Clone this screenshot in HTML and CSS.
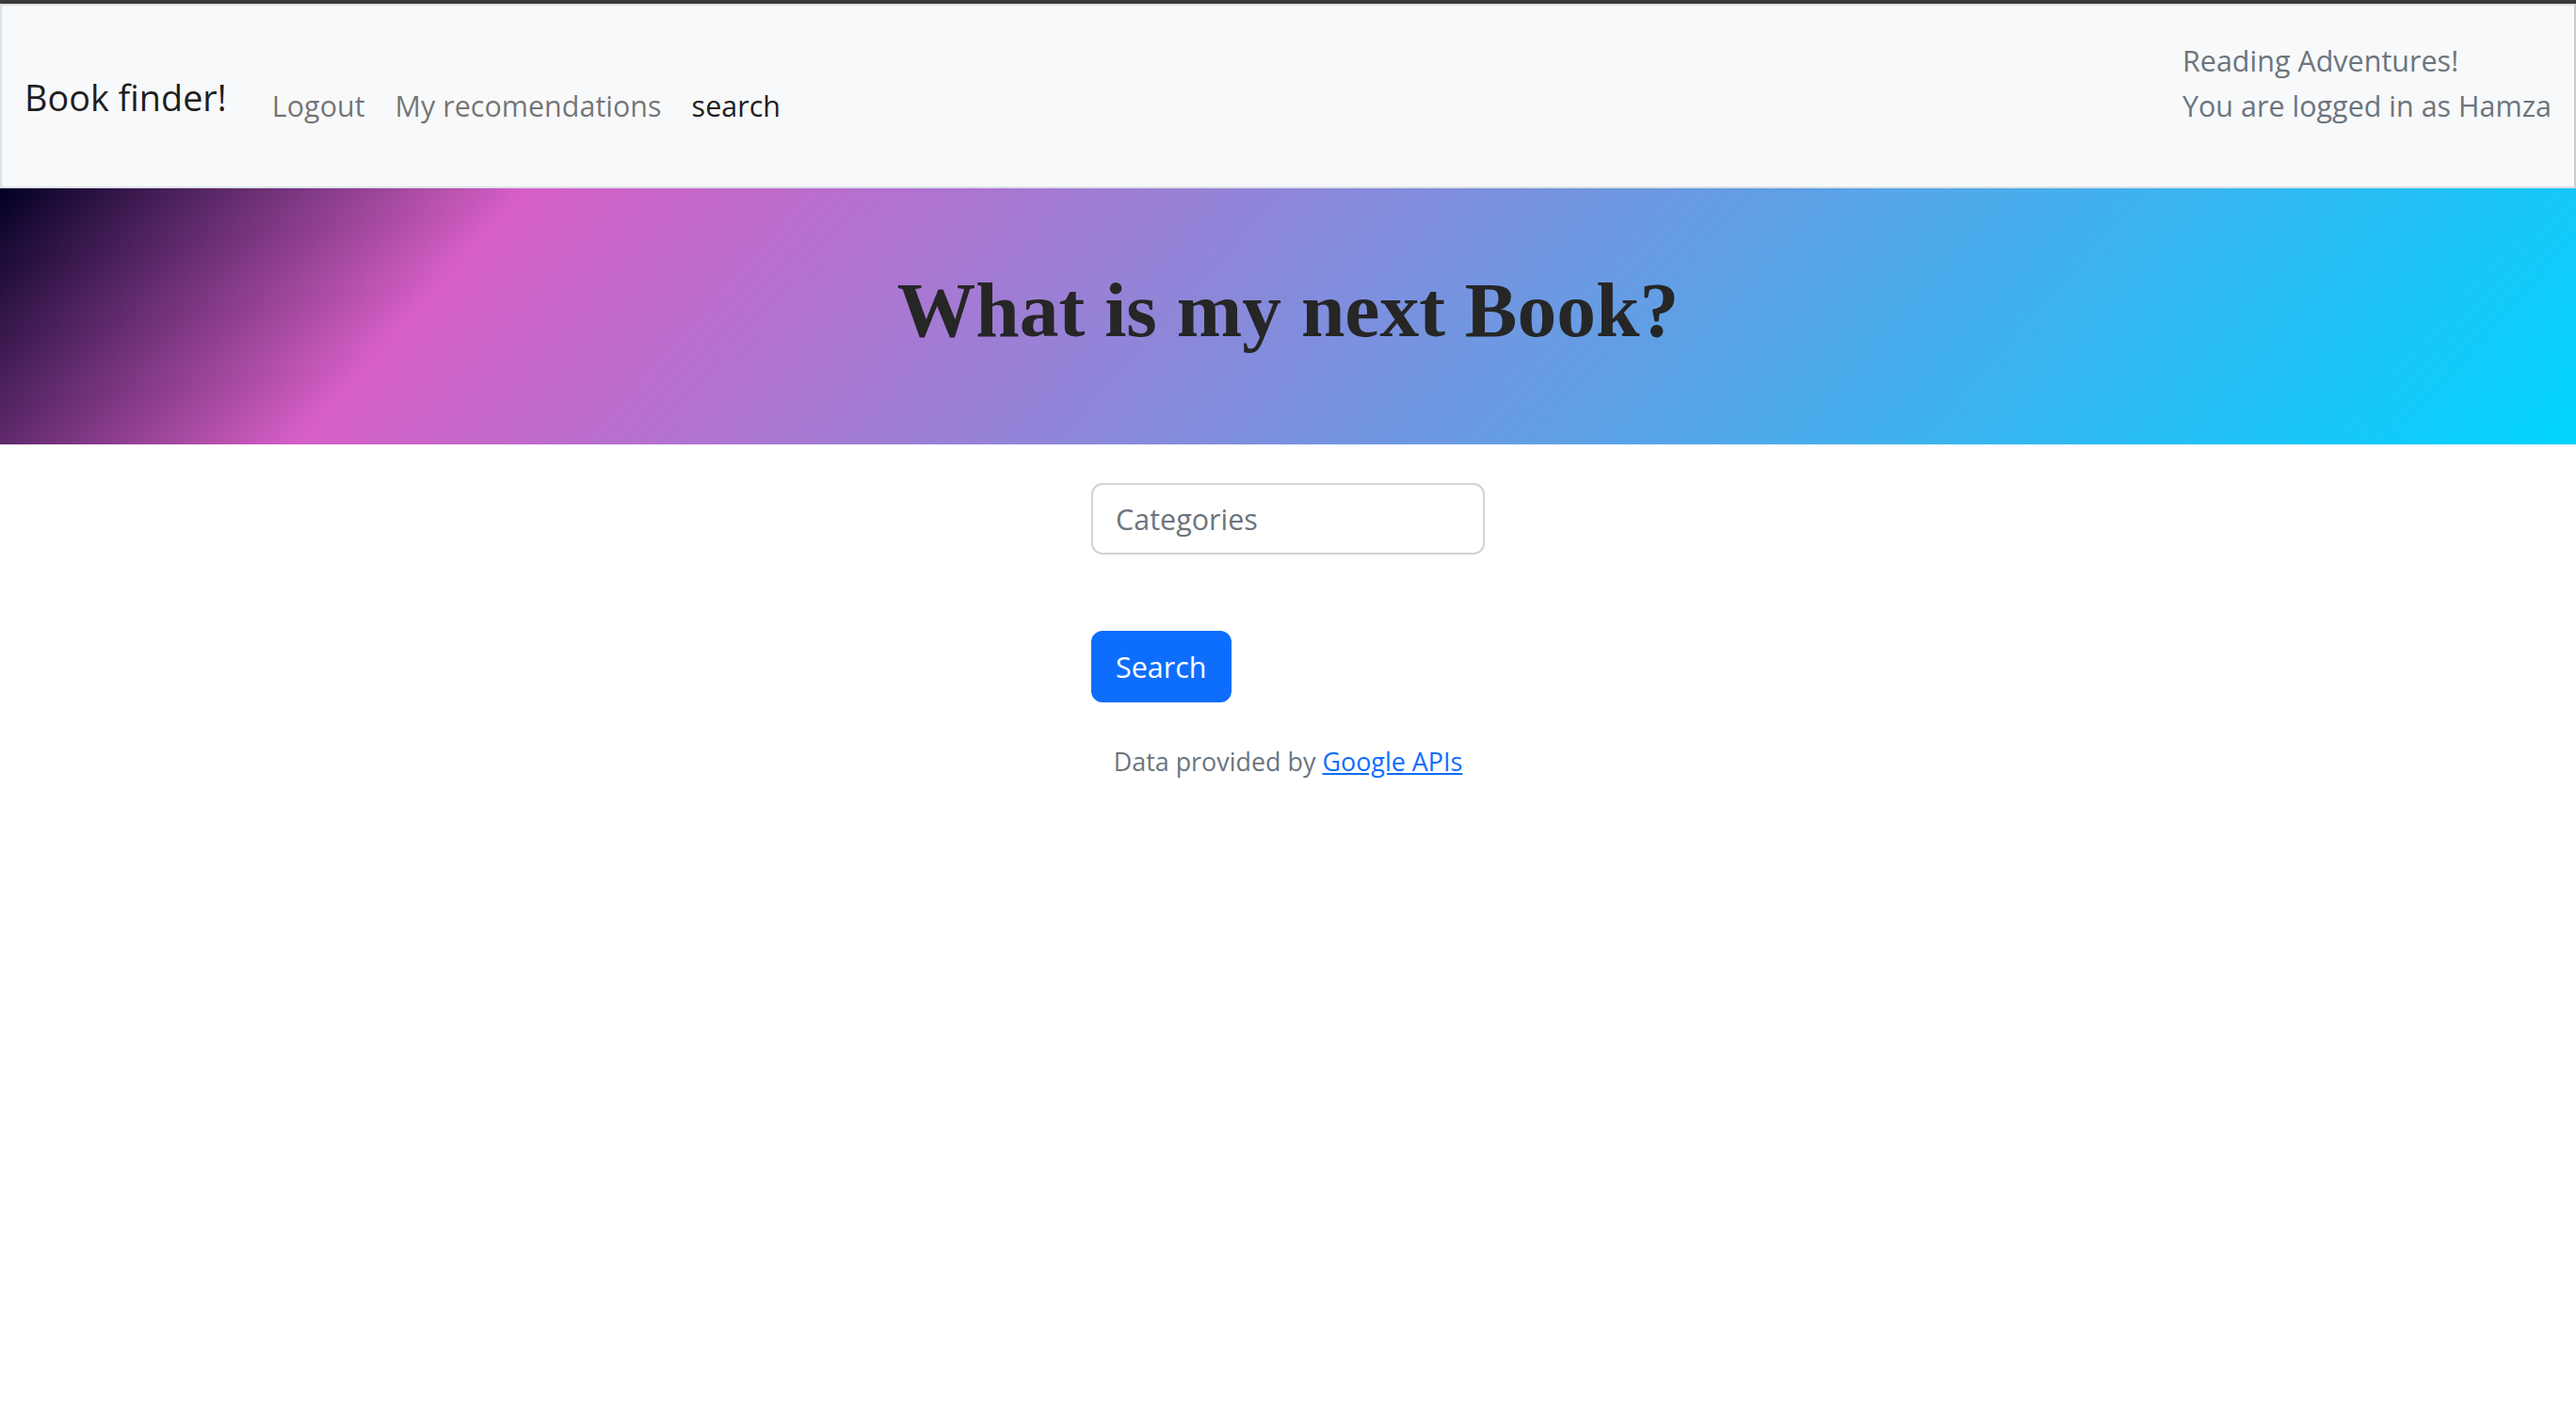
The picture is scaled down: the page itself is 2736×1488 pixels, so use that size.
FILE: index.html
```html
<!DOCTYPE html>
<html lang="en">
<head>
<meta charset="utf-8">
<title>Book finder!</title>
<link rel="stylesheet" href="styles.css">
</head>
<body>
<div class="chrome-strip"></div>
<nav class="navbar">
  <a class="brand" href="#">Book finder!</a>
  <ul class="nav-links">
    <li><a class="nav-link" href="#">Logout</a></li>
    <li><a class="nav-link" href="#">My recomendations</a></li>
    <li><a class="nav-link active" href="#">search</a></li>
  </ul>
  <p class="user-info">Reading Adventures!<br>You are logged in as Hamza</p>
</nav>
<header class="hero">
  <h1 class="hero-title">What is my next Book?</h1>
</header>
<main class="search-form">
  <input class="form-control" type="text" placeholder="Categories">
  <button class="btn-search" type="button">Search</button>
  <p class="credit">Data provided by <a href="#">Google APIs</a></p>
</main>
</body>
</html>
```
FILE: styles.css
```css
* { box-sizing: border-box; }
html, body { margin: 0; padding: 0; }
body {
  font-family: "Open Sans", "Noto Sans", sans-serif;
  font-size: 30.5px;
  line-height: 48px;
  color: #212529;
  background: #fff;
}
.chrome-strip {
  height: 4px;
  background: #3a3a3a;
}
.navbar {
  display: flex;
  align-items: center;
  height: 196px;
  padding: 4px 24px 0;
  background: #f8f9fa;
  border: 2px solid #dee2e6;
  border-right-color: #c9cbcd;
}
.brand {
  font-size: 37.8px;
  line-height: 60px;
  padding: 10px 0;
  margin-right: 32px;
  color: rgba(0,0,0,.9);
  text-decoration: none;
}
.nav-links {
  display: flex;
  list-style: none;
  margin: 16px 0 0;
  padding: 0;
}
.nav-link {
  display: block;
  padding: 16px;
  color: rgba(0,0,0,.55);
  text-decoration: none;
}
.nav-link.active { color: rgba(0,0,0,.9); }
.user-info {
  margin: 0 0 32px auto;
  color: #6c757d;
}
.hero {
  height: 272px;
  padding-top: 79px;
  background: linear-gradient(132deg, #020024 0%, #d65fc6 18.7%, #00d4ff 100%);
}
.hero-title {
  margin: 0;
  text-align: center;
  font-family: "Liberation Serif", "Times New Roman", serif;
  font-weight: 700;
  font-size: 83.5px;
  line-height: 1.2;
  color: #262626;
}
.search-form {
  width: 418px;
  margin: 41px auto 0;
}
.form-control {
  display: block;
  width: 100%;
  height: 76px;
  padding: 12px 24px;
  font: inherit;
  color: #212529;
  background: #fff;
  border: 2px solid #ced4da;
  border-radius: 12px;
  outline: none;
}
.form-control::placeholder { color: #6c757d; opacity: 1; }
.btn-search {
  display: block;
  margin-top: 81px;
  height: 76px;
  padding: 12px 24px;
  font: inherit;
  color: #fff;
  background: #0d6efd;
  border: 2px solid #0d6efd;
  border-radius: 12px;
}
.credit {
  margin: 42px 0 0;
  text-align: center;
  font-size: 26.9px;
  line-height: 42px;
  color: #6c757d;
  white-space: nowrap;
}
.credit a { color: #0d6efd; }
```
